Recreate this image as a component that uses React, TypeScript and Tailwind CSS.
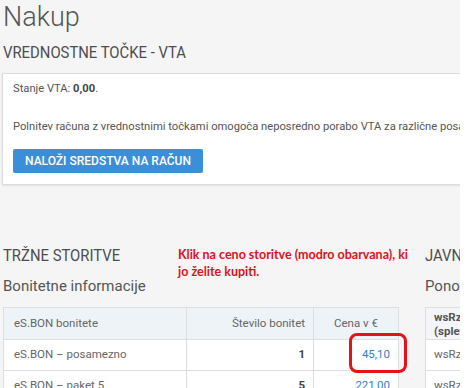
export default function App() {
  const rows = [
    { name: "eS.BON – posamezno", count: "1", price: "45,10" },
    { name: "eS.BON – paket 5", count: "5", price: "221,00" },
  ];

  return (
    <div className="w-[470px] h-[388px] bg-white overflow-hidden">
      <div className="relative w-[460px] h-[388px] overflow-hidden bg-[#f5f5f5] font-['Roboto',sans-serif] text-[#555]">
        <h1 className="pl-[3px] pt-[2px] text-[27px] leading-[30px] font-light text-[#555]">
          Nakup
        </h1>
        {/* condensed heading font is not installed, so squeeze Roboto */}
        <h2 className="mt-[11px] pl-[3px] h-[20px] text-[16.5px] leading-[20px] text-[#4d4d4d]">
          <span className="inline-block origin-left scale-x-[0.9] whitespace-nowrap">
            VREDNOSTNE TOČKE - VTA
          </span>
        </h2>

        <div className="mt-[10px] ml-[2px] w-[520px] h-[112px] border border-[#dcdcdc] bg-white px-[10px] shadow-[0_1px_2px_rgba(0,0,0,0.08)]">
          <p className="mt-[8px] text-[11.2px] leading-[14px] text-[#555]">
            Stanje VTA: <b className="font-bold text-[#444]">0,00</b>.
          </p>
          <p className="mt-[24px] whitespace-nowrap text-[11.2px] leading-[14px] text-[#555]">
            Polnitev računa z vrednostnimi točkami omogoča neposredno porabo VTA za različne posamezne storitve.
          </p>
          <button className="mt-[15px] h-[24px] w-[190px] rounded-[2px] bg-[#3b8fd8] text-[12px] font-medium text-white">
            NALOŽI SREDSTVA NA RAČUN
          </button>
        </div>

        <div className="mt-[62px] flex gap-[26px] pl-[3px]">
          <div className="relative w-[396px] shrink-0">
            <h2 className="h-[18px] text-[16.5px] leading-[18px] text-[#4d4d4d]">
              <span className="inline-block origin-left scale-x-[0.9] whitespace-nowrap">
                TRŽNE STORITVE
              </span>
            </h2>
            <h3 className="mt-[12px] text-[15px] leading-[18px] text-[#555]">
              Bonitetne informacije
            </h3>
            <p className="absolute left-[175px] top-[-1px] w-[250px] text-[12.5px] leading-[17px] font-bold font-['Lato',sans-serif] text-[#e0101a]">
              Klik na ceno storitve (modro obarvana), ki
              <br />
              jo želite kupiti.
            </p>

            <table className="mt-[12px] w-[396px] border-collapse bg-white text-[11.5px] text-[#666]">
              <thead>
                <tr className="h-[32px] bg-[#eef3f8]">
                  <th className="w-[183px] border border-[#dedede] pl-[10px] text-left font-normal">
                    eS.BON bonitete
                  </th>
                  <th className="w-[127px] border border-[#dedede] pr-[8px] text-right font-normal">
                    Število bonitet
                  </th>
                  <th className="border border-[#dedede] text-center font-normal">
                    Cena v €
                  </th>
                </tr>
              </thead>
              <tbody>
                {rows.map((r) => (
                  <tr key={r.name} className="h-[31px]">
                    <td className="border border-[#dedede] pl-[10px]">{r.name}</td>
                    <td className="border border-[#dedede] pr-[8px] text-right font-bold text-[#444]">
                      {r.count}
                    </td>
                    <td className="border border-[#dedede] pr-[8px] text-right text-[#2f7fc6]">
                      {r.price}
                    </td>
                  </tr>
                ))}
              </tbody>
            </table>
            <div className="absolute left-[346px] top-[86px] h-[40px] w-[58px] rounded-[8px] border-[3px] border-[#e3121c]" />
          </div>

          <div className="w-[200px] shrink-0">
            <h2 className="h-[18px] text-[16.5px] leading-[18px] text-[#4d4d4d]">
              <span className="inline-block origin-left scale-x-[0.9] whitespace-nowrap">
                JAVNE STORITVE
              </span>
            </h2>
            <h3 className="mt-[12px] text-[15px] leading-[18px] text-[#555]">
              Ponovna uporaba
            </h3>
            <table className="mt-[12px] w-[200px] border-collapse bg-white text-[11.5px] text-[#666]">
              <thead>
                <tr className="h-[32px] bg-[#f3f5f8]">
                  <th className="border border-[#dedede] pl-[8px] text-left font-bold leading-[14px] text-[#555]">
                    wsRzpp
                    <br />
                    (spletna storitev)
                  </th>
                </tr>
              </thead>
              <tbody>
                <tr className="h-[31px]">
                  <td className="border border-[#dedede] pl-[8px]">wsRzpp</td>
                </tr>
                <tr className="h-[31px]">
                  <td className="border border-[#dedede] pl-[8px]">wsRzpp</td>
                </tr>
              </tbody>
            </table>
          </div>
        </div>
      </div>
    </div>
  );
}
